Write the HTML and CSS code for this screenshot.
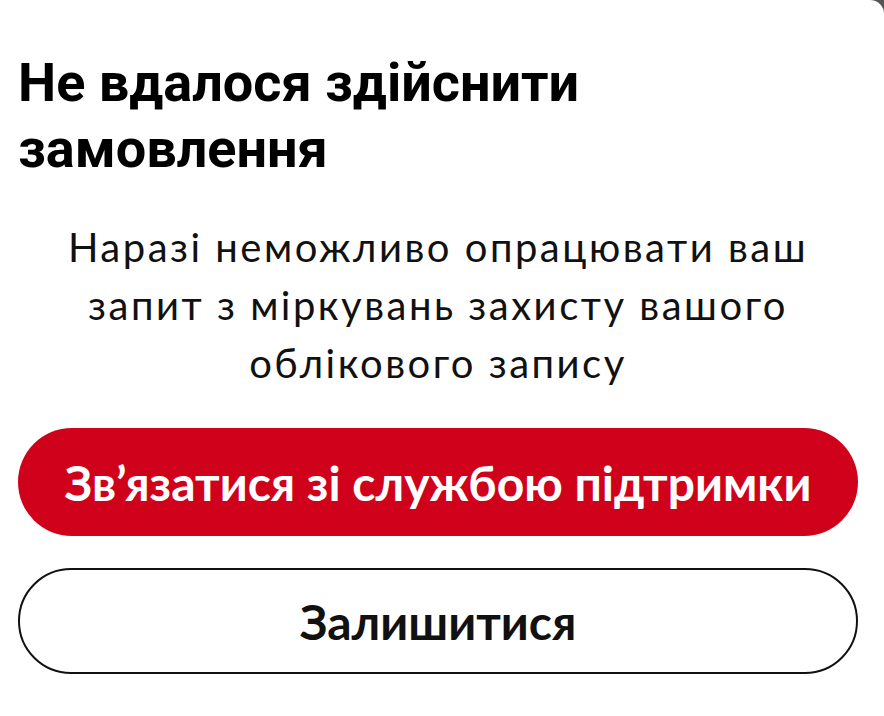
FILE: index.html
```html
<!DOCTYPE html>
<html lang="uk">
<head>
    <meta charset="utf-8">
    <title>Помилка замовлення</title>
    <link rel="stylesheet" href="styles.css">
</head>
<body>
    <div class="sheet">
        <h1 class="sheet-title">Не вдалося здійснити замовлення</h1>
        <p class="sheet-text">Наразі неможливо опрацювати ваш запит з міркувань захисту вашого облікового запису</p>
        <div class="actions">
            <button class="btn btn-primary">Зв’язатися зі службою підтримки</button>
            <button class="btn btn-outline">Залишитися</button>
        </div>
    </div>
</body>
</html>
```

FILE: styles.css
```css
html, body {
    height: 100%;
}
body {
    margin: 0;
    background: #555;
    font-family: Lato, "Open Sans", sans-serif;
    color: #111;
}
.sheet {
    height: 100%;
    box-sizing: border-box;
    background: #fff;
    border-top-right-radius: 14px;
    padding: 50px 26px 0 18px;
}
.sheet-title {
    margin: 0;
    width: 620px;
    font-family: Roboto, Arial, sans-serif;
    font-weight: 700;
    font-size: 54px;
    line-height: 66px;
    color: #000;
}
.sheet-text {
    margin: 36px auto 0;
    max-width: 790px;
    text-align: center;
    font-size: 40px;
    letter-spacing: 2.5px;
    line-height: 58px;
}
.actions {
    display: flex;
    flex-direction: column;
    gap: 32px;
    margin-top: 36px;
}
.btn {
    height: 108px;
    border-radius: 54px;
    font-family: Lato, sans-serif;
    font-weight: 700;
    font-size: 48px;
    cursor: pointer;
}
.btn-primary {
    background: #d0021b;
    color: #fff;
    border: none;
}
.btn-outline {
    background: #fff;
    color: #111;
    border: 2px solid #111;
    height: 106px;
}
```
